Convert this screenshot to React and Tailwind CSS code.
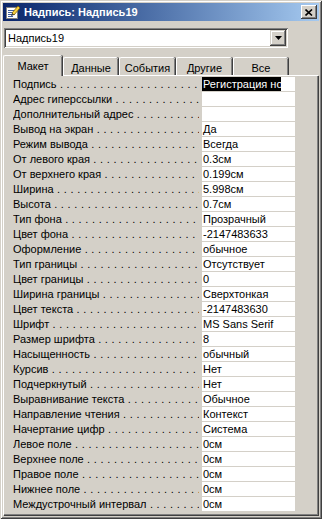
const rows = [
  ["Подпись", "Регистрация нового", true],
  ["Адрес гиперссылки", ""],
  ["Дополнительный адрес", ""],
  ["Вывод на экран", "Да"],
  ["Режим вывода", "Всегда"],
  ["От левого края", "0.3см"],
  ["От верхнего края", "0.199см"],
  ["Ширина", "5.998см"],
  ["Высота", "0.7см"],
  ["Тип фона", "Прозрачный"],
  ["Цвет фона", "-2147483633"],
  ["Оформление", "обычное"],
  ["Тип границы", "Отсутствует"],
  ["Цвет границы", "0"],
  ["Ширина границы", "Сверхтонкая"],
  ["Цвет текста", "-2147483630"],
  ["Шрифт", "MS Sans Serif"],
  ["Размер шрифта", "8"],
  ["Насыщенность", "обычный"],
  ["Курсив", "Нет"],
  ["Подчеркнутый", "Нет"],
  ["Выравнивание текста", "Обычное"],
  ["Направление чтения", "Контекст"],
  ["Начертание цифр", "Система"],
  ["Левое поле", "0см"],
  ["Верхнее поле", "0см"],
  ["Правое поле", "0см"],
  ["Нижнее поле", "0см"],
  ["Междустрочный интервал", "0см"],
];

const dots = ". ".repeat(40);

function Row({ label, value, selected }) {
  return (
    <div className="flex h-[15px] items-start">
      <div className="w-[186px] mr-[3px] h-[14px] overflow-hidden whitespace-pre leading-[14px]">
        {label}
        <span className="tracking-[0.3px]"> {dots}</span>
      </div>
      <div className="w-[93px] h-[14px] bg-white leading-[14px] whitespace-nowrap overflow-hidden">
        {selected ? (
          <div className="w-[79px] h-[14px] bg-black text-white overflow-hidden pl-[1px]">{value}</div>
        ) : (
          <div className="pl-[1px]">{value}</div>
        )}
      </div>
    </div>
  );
}

function Tab({ children, w, selected }) {
  if (selected) {
    return (
      <div
        className={`relative z-10 h-[21px] -mb-[1px] bg-[#d4d0c8] border-t border-l border-white rounded-tl-[2px] rounded-tr-[2px] shadow-[inset_-1px_0_0_#808080,1px_0_0_#404040] flex items-start justify-center pt-[2px] ${w}`}
      >
        {children}
      </div>
    );
  }
  return (
    <div
      className={`h-[18px] bg-[#d4d0c8] border-t border-l border-white rounded-tl-[2px] rounded-tr-[2px] shadow-[inset_-1px_0_0_#808080,1px_0_0_#404040] flex items-start justify-center pt-[2px] ${w}`}
    >
      {children}
    </div>
  );
}

export default function App() {
  return (
    <div
      className="w-[322px] h-[519px] bg-[#d4d0c8] p-[3px] flex flex-col text-[11px] text-black shadow-[inset_1px_1px_0_#d4d0c8,inset_-1px_-1px_0_#404040,inset_2px_2px_0_#ffffff,inset_-2px_-2px_0_#808080]"
      style={{ fontFamily: '"Liberation Sans", Arial, sans-serif' }}
    >
      {/* title bar */}
      <div className="h-[18px] flex items-center bg-gradient-to-r from-[#0a246a] to-[#a6caf0]">
        <svg width="16" height="16" viewBox="0 0 16 16" className="ml-[2px] shrink-0">
          <rect x="1.5" y="3.5" width="11" height="11" fill="#ffffff" stroke="#808080" />
          <rect x="3" y="6" width="7" height="1" fill="#4060a0" />
          <rect x="3" y="8" width="7" height="1" fill="#4060a0" />
          <rect x="3" y="10" width="7" height="1" fill="#4060a0" />
          <rect x="3" y="12" width="5" height="1" fill="#4060a0" />
          <path d="M7 9 L13 2 L15 4 L9 11 Z" fill="#f8d040" stroke="#806000" strokeWidth="0.8" />
          <path d="M7 9 L9 11 L6 12 Z" fill="#404040" />
        </svg>
        <span className="ml-[3px] font-bold text-white text-[11px] whitespace-nowrap">Надпись: Надпись19</span>
        <div className="ml-auto mr-[2px] w-[16px] h-[14px] bg-[#d4d0c8] flex items-center justify-center shadow-[inset_-1px_-1px_0_#404040,inset_1px_1px_0_#ffffff,inset_-2px_-2px_0_#808080]">
          <svg width="8" height="7" viewBox="0 0 8 7">
            <path d="M0.5 0.5 L7 6.5 M7 0.5 L0.5 6.5" stroke="#000" strokeWidth="1.6" />
          </svg>
        </div>
      </div>

      {/* combobox */}
      <div className="mt-[7px] ml-[1px] w-[284px] h-[20px] bg-white flex items-center shadow-[inset_1px_1px_0_#808080,inset_-1px_-1px_0_#ffffff,inset_2px_2px_0_#404040,inset_-2px_-2px_0_#d4d0c8]">
        <span className="ml-[4px] leading-[14px]">Надпись19</span>
        <div className="ml-auto mr-[2px] w-[16px] h-[16px] bg-[#d4d0c8] flex items-center justify-center shadow-[inset_-1px_-1px_0_#404040,inset_1px_1px_0_#d4d0c8,inset_-2px_-2px_0_#808080,inset_2px_2px_0_#ffffff]">
          <svg width="7" height="4" viewBox="0 0 7 4">
            <path d="M0 0 H7 L3.5 4 Z" fill="#000" />
          </svg>
        </div>
      </div>

      {/* tabs */}
      <div className="mt-[7px] flex items-end h-[20px]">
        <Tab w="w-[59px]" selected>
          Макет
        </Tab>
        <Tab w="w-[55px] ml-[1px]">Данные</Tab>
        <Tab w="w-[56px] ml-[1px]">События</Tab>
        <Tab w="w-[56px] ml-[1px]">Другие</Tab>
        <Tab w="w-[55px] ml-[1px]">Все</Tab>
      </div>

      {/* panel */}
      <div className="flex-1 border-t border-l border-white shadow-[1px_1px_0_#404040,inset_-1px_-1px_0_#808080] mr-[1px] mb-[1px] pt-[1px] pl-[9px]">
        {rows.map(([l, v, s]) => (
          <Row key={l} label={l} value={v} selected={s} />
        ))}
      </div>
    </div>
  );
}
